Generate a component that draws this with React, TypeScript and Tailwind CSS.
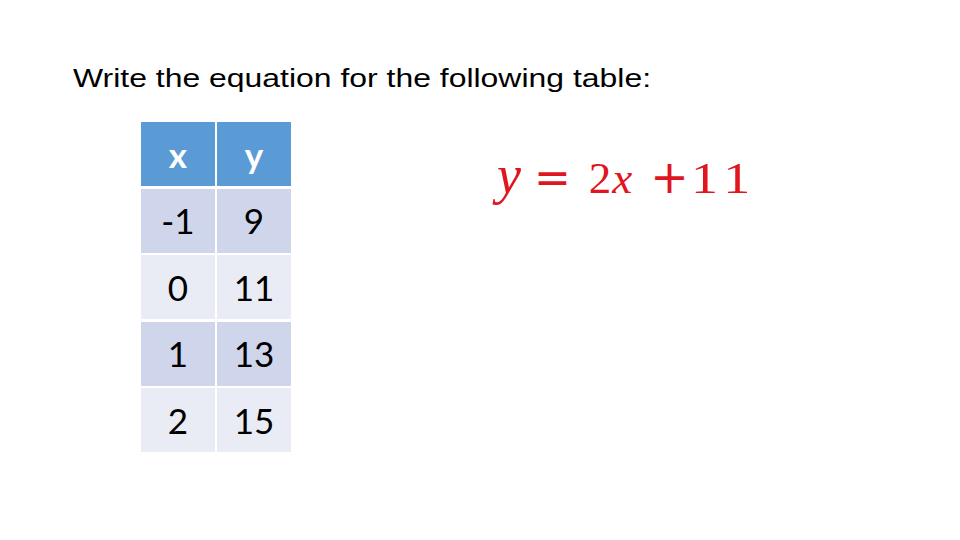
const rows = [
  ['-1', '9'],
  ['0', '11'],
  ['1', '13'],
  ['2', '15'],
];

export default function App() {
  return (
    <div className="w-[960px] h-[540px] bg-white overflow-hidden">
      <div className="pt-[63px] pl-[73px]">
        <h1 className="text-[26px] leading-[30px] text-black font-['Liberation_Sans',Arial,sans-serif] origin-left scale-x-[1.228] whitespace-nowrap">
          Write the equation for the following table:
        </h1>
      </div>

      <div className="flex items-start mt-[29px]">
        <div className="ml-[141px] grid grid-cols-[74px_74px] gap-x-[2px] gap-y-[2.5px] font-['Lato','Open_Sans',sans-serif] text-[35px]">
          <div className="h-[64px] bg-[#5b9bd5] text-white font-bold flex items-center justify-center">x</div>
          <div className="h-[64px] bg-[#5b9bd5] text-white font-bold flex items-center justify-center">y</div>
          {rows.map(([x, y], i) => (
            <div key={x} className="contents">
              <div className={`h-[64px] flex items-center justify-center text-black ${i % 2 === 0 ? 'bg-[#cfd5ea]' : 'bg-[#e9ebf5]'}`}>{x}</div>
              <div className={`h-[64px] flex items-center justify-center text-black ${i % 2 === 0 ? 'bg-[#cfd5ea]' : 'bg-[#e9ebf5]'}`}>{y}</div>
            </div>
          ))}
        </div>

        <div className="ml-[206px] mt-[28px] flex items-baseline text-[#e0161e] text-[45px] leading-[50px] font-['Liberation_Serif','Times_New_Roman',serif] whitespace-nowrap">
          <i className="text-[54px]">y</i>
          <span className="ml-[13px] font-['DejaVu_Sans',sans-serif] text-[44px]">=</span>
          <span className="ml-[18px]">2</span>
          <i className="ml-[1px]">x</i>
          <span className="ml-[18px] font-['DejaVu_Sans',sans-serif] text-[46px]">+</span>
          <span className="ml-[2px] inline-block origin-left scale-x-[1.2] tracking-[6px]">11</span>
        </div>
      </div>
    </div>
  );
}
